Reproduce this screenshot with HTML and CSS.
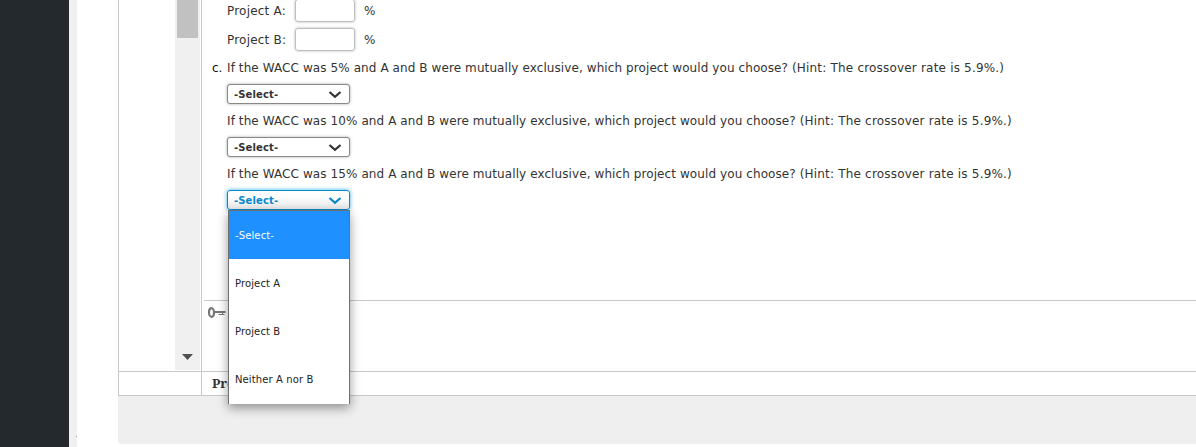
FILE: index.html
```html
<!DOCTYPE html>
<html lang="en">
<head>
<meta charset="utf-8">
<title>Assignment</title>
<link rel="stylesheet" href="styles.css">
</head>
<body>
<div class="app">
  <aside class="sidebar"></aside>
  <div class="gutter"></div>
  <div class="margin"><span class="dot"></span></div>
  <main class="panel">
    <div class="upper">
      <div class="nav-col"></div>
      <div class="scrollbar">
        <div class="thumb"></div>
        <svg class="scroll-arrow" width="11" height="6" viewBox="0 0 11 6"><path d="M0 0h11L5.500 6z" fill="#4f4f4f"/></svg>
      </div>
      <section class="content">
        <div class="questions">
          <div class="field"><span class="label">Project A:</span><span class="entry"></span><span class="unit">%</span></div>
          <div class="field"><span class="label">Project B:</span><span class="entry"></span><span class="unit">%</span></div>
          <div class="question"><span class="marker">c.</span><span class="prompt">If the WACC was 5% and A and B were mutually exclusive, which project would you choose? <span class="hint">(Hint: The crossover rate is 5.9%.)</span></span></div>
          <div class="select"><span class="select-text">-Select-</span><svg class="chevron" width="14" height="9" viewBox="0 0 14 9"><path d="M1.500 2L7 6.800 12.500 2"/></svg></div>
          <div class="question"><span class="marker"></span><span class="prompt">If the WACC was 10% and A and B were mutually exclusive, which project would you choose? <span class="hint">(Hint: The crossover rate is 5.9%.)</span></span></div>
          <div class="select"><span class="select-text">-Select-</span><svg class="chevron" width="14" height="9" viewBox="0 0 14 9"><path d="M1.500 2L7 6.800 12.500 2"/></svg></div>
          <div class="question"><span class="marker"></span><span class="prompt">If the WACC was 15% and A and B were mutually exclusive, which project would you choose? <span class="hint">(Hint: The crossover rate is 5.9%.)</span></span></div>
          <div class="select active"><span class="select-text">-Select-</span><svg class="chevron" width="14" height="9" viewBox="0 0 14 9"><path d="M1.500 2L7 6.800 12.500 2"/></svg>
            <div class="menu">
              <div class="option selected"><span>-Select-</span></div>
              <div class="option"><span>Project A</span></div>
              <div class="option"><span>Project B</span></div>
              <div class="option"><span>Neither A nor B</span></div>
            </div>
          </div>
        </div>
        <div class="tools">
          <svg width="18" height="11" viewBox="0 0 18 11" fill="none" stroke="#777"><ellipse cx="3.500" cy="5.500" rx="2.500" ry="4.300" stroke-width="2.200"/><path d="M6 5h11.500" stroke-width="2"/><path d="M10.500 7.500h6M14.500 5v2.500" stroke-width="1"/></svg>
        </div>
      </section>
    </div>
    <div class="lower"><div class="lower-left"></div><div class="lower-title">Pro</div></div>
    <div class="footer"></div>
  </main>
</div>
</body>
</html>
```
FILE: styles.css
```css
body {
  margin: 0;
  background: #fff;
  color: #333;
  font-family: "DejaVu Sans", sans-serif;
  font-size: 12px;
}
.app { display: flex; height: 447px; overflow: hidden; }
.sidebar { width: 69px; background: #24292d; }
.gutter { width: 8px; background: #f0f0f0; }
.margin { width: 41px; display: flex; align-items: flex-end; }
.dot { width: 1px; height: 1px; margin: 0 0 10px -1px; background: #999; }
.panel { flex: 1; min-width: 0; }
.upper { display: flex; height: 371px; border-left: 1px solid #c8c8c8; }
.nav-col { width: 56px; }
.scrollbar {
  display: flex;
  flex-direction: column;
  justify-content: space-between;
  align-items: center;
  width: 25px;
  height: 370px;
  margin-right: 1px;
  background: #f0f0f0;
}
.thumb { width: 21px; height: 38px; background: #c1c1c1; }
.scroll-arrow { margin-bottom: 10px; }
.content { flex: 1; min-width: 0; border-left: 1px solid #c8c8c8; }
.questions { height: 300px; }
.field {
  display: flex;
  align-items: center;
  height: 21px;
  margin: 0 0 8px 25px;
}
.label { width: 68px; letter-spacing: 0.2px; white-space: nowrap; }
.entry {
  box-sizing: border-box;
  width: 60px;
  height: 23px;
  border: 1px solid #bdbdbd;
  border-radius: 3px;
  box-shadow: 0 0 3px #bbb;
}
.unit { margin-left: 9px; }
.question { display: flex; align-items: center; height: 20px; white-space: nowrap; }
.marker { width: 15px; margin-left: 10px; color: #111; }
.prompt { letter-spacing: 0.09px; }
.hint { letter-spacing: 0.19px; }
.select {
  position: relative;
  box-sizing: border-box;
  display: flex;
  align-items: center;
  justify-content: space-between;
  width: 123px;
  height: 20px;
  margin: 6px 0 7px 25px;
  padding: 0 7px 0 6px;
  border: 1px solid #888;
  border-radius: 3px;
  background: #fff;
  box-shadow: 0 0 3px #aaa;
  font-size: 10px;
  font-weight: bold;
  letter-spacing: 0.12px;
}
.chevron { fill: none; stroke: currentColor; stroke-width: 2.2; }
.active {
  color: #0788ce;
  border-color: #0788ce;
  background: linear-gradient(#fff 30%, #e8e8e8);
  box-shadow: 0 0 4px #39aee8;
}
.menu {
  position: absolute;
  top: 19px;
  left: 0;
  z-index: 2;
  box-sizing: border-box;
  width: 122px;
  height: 194px;
  border: 1px solid #707070;
  border-bottom: 0;
  background: #fff;
  box-shadow: 0 4px 10px rgba(0, 0, 0, 0.4);
  color: #222;
  font-weight: normal;
}
.option { display: flex; align-items: center; height: 48px; padding-left: 6px; }
.option.selected { background: #1e90ff; color: #fff; }
.tools { height: 70px; margin-left: 2px; padding: 6px 0 0 4px; box-sizing: border-box; border-top: 1px solid #c8c8c8; }
.tools svg { display: block; }
.lower {
  box-sizing: border-box;
  display: flex;
  height: 25px;
  border: 1px solid #c8c8c8;
  border-right: 0;
}
.lower-left { width: 82px; border-right: 1px solid #c8c8c8; }
.lower-title {
  padding-left: 10px;
  font: bold 13px/22px "Noto Serif", "Liberation Serif", serif;
}
.footer { height: 48px; background: #efefef; border-bottom-left-radius: 4px; }
```
